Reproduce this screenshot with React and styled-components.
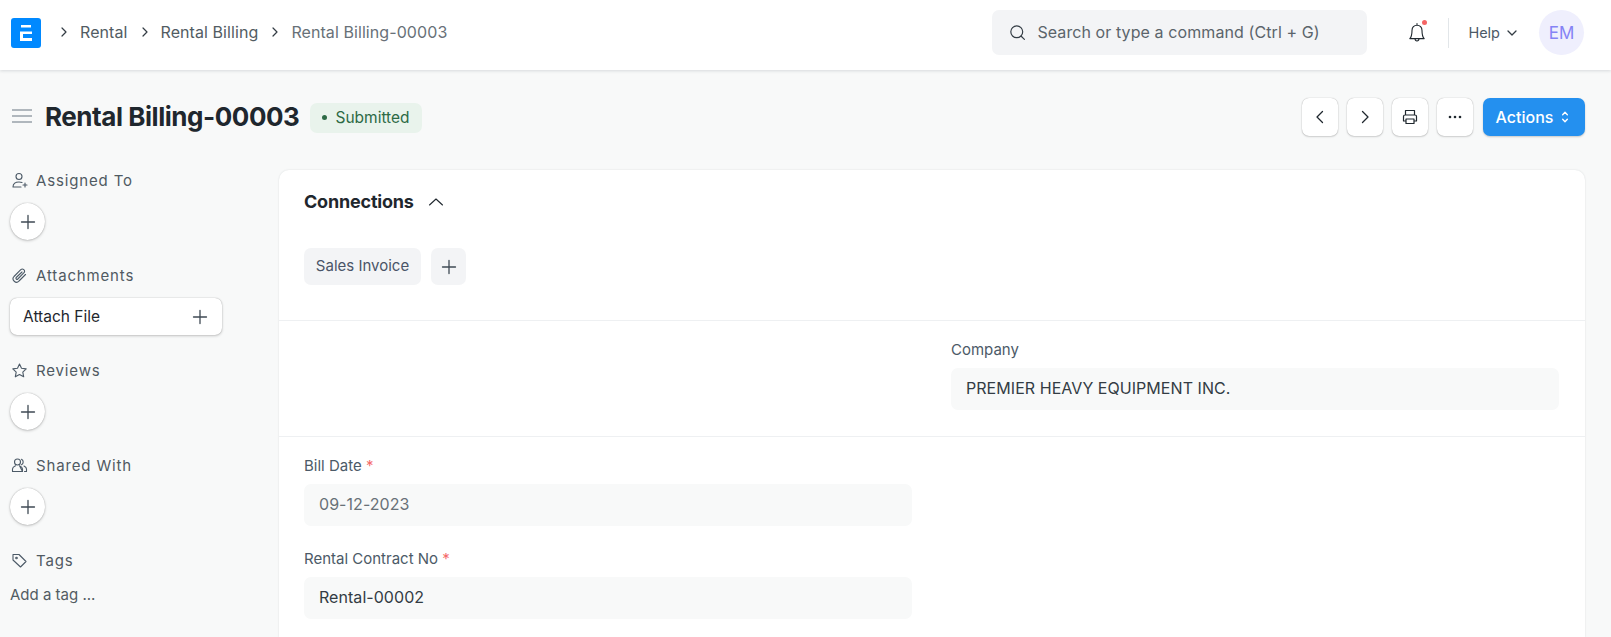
import React from "react";
import styled, { createGlobalStyle } from "styled-components";

const Global = createGlobalStyle`
  html, body { margin: 0; padding: 0; background: #f8f9f9; height: 637px; overflow: hidden; }
  body { font-family: Inter, "Liberation Sans", sans-serif; color: #1f272e; }
  * { box-sizing: border-box; }
`;

const Page = styled.div`width: 1611px; height: 637px; overflow: hidden; display: flex; flex-direction: column;`;
const Navbar = styled.header`
  height: 70px; flex: none; background: #fff; display: flex; align-items: center;
  padding: 0 27px 0 11px; box-shadow: 0 1px 3px rgba(25,39,52,.15);
`;
const Logo = styled.div`
  width: 30px; height: 30px; border-radius: 3px; background: #0089ff; margin-right: 17px; margin-top: -4px;
  display: flex; align-items: center; justify-content: center;
`;
const Crumbs = styled.nav`display: flex; align-items: center; flex: 1; margin-top: -6px;`;
const Crumb = styled.span`
  font-size: 16px; letter-spacing: .08px; color: ${p => (p.$last ? "#687178" : "#525c63")}; margin-left: 10px; margin-right: 11px;
  &:last-child { margin-right: 0; }
`;
const SearchBox = styled.div`
  width: 375px; height: 45px; border-radius: 7px; background: #f3f4f6; display: flex; align-items: center;
  padding: 0 0 1px 17px; gap: 11px; margin-top: -5px; font-size: 16px; color: #5b646b; letter-spacing: .09px;
`;
const BellWrap = styled.div`position: relative; width: 24px; height: 24px; margin-left: 38px; margin-top: -5px;`;
const BellDot = styled.span`position: absolute; top: -1px; right: 2px; width: 5px; height: 5px; border-radius: 50%; background: #f56565;`;
const VDivider = styled.div`width: 1px; height: 30px; background: #e2e6e9; margin: -5px 19px 0 19px;`;
const Help = styled.div`display: flex; align-items: center; gap: 6px; font-size: 14.5px; color: #4c5a67; margin-top: -5px;`;
const Avatar = styled.div`
  width: 45px; height: 45px; border-radius: 50%; background: #efeffd; color: #8583f5; margin-left: 21px; margin-top: -5px;
  display: flex; align-items: center; justify-content: center; font-size: 17px;
`;

const PageHead = styled.div`height: 100px; flex: none; display: flex; align-items: center; padding: 0 26px 0 12px;`;
const Burger = styled.div`margin-right: 13px; display: flex; margin-top: -8px;`;
const Title = styled.h1`margin: -8px 0 0; font-size: 26px; font-weight: 700; color: #1f272e; letter-spacing: -.45px;`;
const Badge = styled.div`
  margin: -5px 0 0 11px; height: 30px; padding: 0 12px; border-radius: 7px; background: #e9f3ec; color: #2d6a45;
  display: flex; align-items: center; gap: 8px; font-size: 15.5px;
  &::before { content: ""; width: 5px; height: 5px; border-radius: 50%; background: #2d6a45; }
`;
const Spacer = styled.div`flex: 1;`;
const Tools = styled.div`display: flex; gap: 9px; margin-top: -6px;`;
const ToolBtn = styled.button`
  width: 36px; height: 38px; padding: 0; border: 0; border-radius: 7px; background: #fff; display: flex; align-items: center; justify-content: center;
  box-shadow: 0 0 1px rgba(0,0,0,.35), 0 1px 2px rgba(0,0,0,.15);
`;
const ActionBtn = styled.button`
  width: 102px; height: 38px; margin-left: 1px; border: 0; border-radius: 7px; background: #2490ef; color: #fff; font: 500 16px Inter, sans-serif;
  display: flex; align-items: center; justify-content: center; gap: 5px; box-shadow: 0 1px 2px rgba(0,0,0,.2);
`;

const Body = styled.div`display: flex; flex: 1; min-height: 0; padding: 0 26px 0 10px;`;
const Side = styled.aside`width: 269px; flex: none; display: flex; flex-direction: column;`;
const SideSection = styled.section`height: ${p => p.$h || 95}px; flex: none;`;
const SideLabel = styled.div`
  display: flex; align-items: center; gap: 8px; font-size: 15px; font-weight: 400; letter-spacing: .85px; color: #505a62; height: 20px; margin-bottom: 13px; padding-left: 1px;
`;
const Round = styled.button`
  display: flex; align-items: center; justify-content: center; width: 35px; height: 37px; border: 0; padding: 0; border-radius: 50%; background: #fff;
  box-shadow: 0 0 1px rgba(0,0,0,.35), 0 1px 3px rgba(0,0,0,.2);
`;
const Attach = styled.button`
  width: 212px; height: 37px; border: 0; border-radius: 7px; background: #fff; padding: 0 14px 0 13px; display: flex; align-items: center; justify-content: space-between;
  font: 400 15.5px Inter, sans-serif; color: #1f272e; box-shadow: 0 0 1px rgba(0,0,0,.35), 0 1px 3px rgba(0,0,0,.2);
`;
const AddTag = styled.div`font-size: 15px; color: #525c63; padding-top: 2px;`;

const Card = styled.main`
  flex: 1; background: #fff; border-radius: 10px 10px 0 0; box-shadow: 0 0 2px rgba(25,39,52,.14);
`;
const Section = styled.div`padding: ${p => p.$pad || "0 25px"}; height: ${p => p.$h}px; border-bottom: ${p => (p.$line ? "1px solid #eef0f2" : "none")};`;
const ConnHead = styled.div`display: flex; align-items: center; gap: 14px; font-size: 18px; font-weight: 700; letter-spacing: -.2px; color: #1f272e; height: 24px;`;
const ConnTitle = styled.span`position: relative; top: -1px;`;
const Pills = styled.div`display: flex; gap: 10px; margin-top: 34px;`;
const Pill = styled.div`
  height: 37px; border-radius: 7px; background: #f3f4f6; font-size: 15px; color: #4a5468; display: flex; align-items: center; justify-content: center;
  white-space: nowrap; width: ${p => (p.$icon ? "35px" : "117px")}; padding-bottom: ${p => (p.$icon ? "0" : "2px")};
`;
const Columns = styled.div`display: grid; grid-template-columns: 608px 608px; gap: 39px;`;
const Field = styled.div`margin-bottom: ${p => p.$mb || 0}px; grid-column: ${p => p.$col || "auto"};`;
const Label = styled.label`display: block; font-size: 15px; color: #4c5a67; height: 20px; line-height: 20px; margin-bottom: 8px;`;
const Req = styled.span`color: #f56b6b;`;
const Value = styled.div`
  height: 42px; border-radius: 7px; background: #f8f9f9; display: flex; align-items: center; padding: 0 0 2px 15px; font-size: 16px;
  letter-spacing: .05px; color: ${p => p.$muted ? "#687178" : "#333c44"};
`;

const S = { fill: "none", stroke: "currentColor", strokeLinecap: "round", strokeLinejoin: "round" };
const Icon = ({ size = 16, color = "#4c5a67", sw = 1.1, children, vb = "0 0 16 16" }) => (
  <svg width={size} height={size} viewBox={vb} style={{ color, flex: "none" }} {...S} strokeWidth={sw}>{children}</svg>
);
const Plus = ({ size = 16, sw = 1.3 }) => <Icon size={size} sw={sw} color="#3f4a54"><path d="M8 1.500v13M1.500 8h13" /></Icon>;
const Chevron = () => <Icon size={12} color="#333c44" sw={1.2} vb="0 0 12 12"><path d="M4 2l4 4-4 4" /></Icon>;

export default function App() {
  return (
    <Page>
      <Global />
      <Navbar>
        <Logo>
          <svg width="14" height="16" viewBox="0 0 14 16" fill="#fff"><path d="M2 0h10v2.600H2zM1 6.400h12V9H1zM1 6.400h3V16H1zM1 13h12v3H1z" /></svg>
        </Logo>
        <Crumbs>
          <Chevron /><Crumb>Rental</Crumb>
          <Chevron /><Crumb>Rental Billing</Crumb>
          <Chevron /><Crumb $last>Rental Billing-00003</Crumb>
        </Crumbs>
        <SearchBox>
          <Icon size={17} color="#333c44" sw={1.1}><circle cx="7.300" cy="7.300" r="5.600" /><path d="M11.500 11.500l3 3" /></Icon>
          Search or type a command (Ctrl + G)
        </SearchBox>
        <BellWrap>
          <Icon size={24} color="#1f272e" sw={1.1} vb="0 0 24 24"><path d="M12 4.200c-3 0-5 2.200-5 5.200 0 4.400-.6 6.600-2.200 8.200h14.400c-1.600-1.600-2.200-3.800-2.200-8.200 0-3-2-5.200-5-5.200zM12 2.500v1.700M10 17.800c.1 1.400.9 2.200 2 2.200s1.900-.8 2-2.200" /></Icon>
          <BellDot />
        </BellWrap>
        <VDivider />
        <Help>
          Help
          <Icon size={12} color="#333c44" sw={1.3} vb="0 0 12 12"><path d="M2 4l4 4 4-4" /></Icon>
        </Help>
        <Avatar>EM</Avatar>
      </Navbar>
      <PageHead>
        <Burger><Icon size={20} color="#98a1a9" sw={1.7} vb="0 0 20 20"><path d="M.5 4h19M.5 10h19M.5 16h19" /></Icon></Burger>
        <Title>Rental Billing-00003</Title>
        <Badge>Submitted</Badge>
        <Spacer />
        <Tools>
          <ToolBtn><Icon size={16} color="#1f272e" sw={1.3}><path d="M10.500 2.500L5 8l5.500 5.500" /></Icon></ToolBtn>
          <ToolBtn><Icon size={16} color="#1f272e" sw={1.3}><path d="M5.500 2.500L11 8l-5.500 5.500" /></Icon></ToolBtn>
          <ToolBtn>
            <Icon size={18} color="#1f272e" sw={1.2} vb="0 0 18 18"><path d="M4.500 7V2.500h9V7M4.500 13H2.500V8.500A1.500 1.500 0 0 1 4 7h10a1.500 1.500 0 0 1 1.500 1.500V13h-2M5 11h8v4.500H5z" /></Icon>
          </ToolBtn>
          <ToolBtn>
            <svg width="14" height="4" viewBox="0 0 14 4" fill="#1f272e"><circle cx="2" cy="2" r="1.300" /><circle cx="7" cy="2" r="1.300" /><circle cx="12" cy="2" r="1.300" /></svg>
          </ToolBtn>
          <ActionBtn>
            Actions
            <Icon size={14} color="#fff" sw={1.2} vb="0 0 12 12"><path d="M4 4l2-2 2 2M4 8l2 2 2-2" /></Icon>
          </ActionBtn>
        </Tools>
      </PageHead>
      <Body>
        <Side>
          <SideSection>
            <SideLabel>
              <Icon size={17} vb="0 0 17 17"><circle cx="8" cy="4.500" r="3" /><path d="M2 15c0-3.500 2.500-5 6-5 1.200 0 2.200.2 3 .5M2 15h8M12 13h4M14 11v4" /></Icon>
              Assigned To
            </SideLabel>
            <Round><Plus /></Round>
          </SideSection>
          <SideSection>
            <SideLabel>
              <Icon size={17} vb="0 0 17 17"><path d="M14.500 7.500l-6.500 6.500a3.300 3.300 0 0 1-5-4.500l6.800-6.800a2.200 2.200 0 0 1 3.200 3L6.800 12a1.100 1.100 0 0 1-1.600-1.500L11 5" /></Icon>
              Attachments
            </SideLabel>
            <Attach>Attach File<Plus /></Attach>
          </SideSection>
          <SideSection>
            <SideLabel>
              <Icon size={17} vb="0 0 17 17"><path d="M8.500 2l2 4.300 4.700.6-3.400 3.200.9 4.700-4.200-2.300-4.200 2.300.9-4.700L1.800 6.900l4.700-.6z" /></Icon>
              Reviews
            </SideLabel>
            <Round><Plus /></Round>
          </SideSection>
          <SideSection>
            <SideLabel>
              <Icon size={17} vb="0 0 17 17"><circle cx="6.500" cy="5" r="3" /><path d="M1.500 14.500V12c0-1.500 1.500-2.500 3-3.200M8.500 8.800c1.500.7 3 1.700 3 3.200v2.500zM1.500 14.500h10M10.500 2.300a3 3 0 0 1 0 5.400M13 9c1.300.6 2.500 1.600 2.500 3v2.500h-2" /></Icon>
              Shared With
            </SideLabel>
            <Round><Plus /></Round>
          </SideSection>
          <SideSection>
            <SideLabel>
              <Icon size={17} vb="0 0 17 17"><path d="M2 2.500h6l7 7-5.500 5.500-7.500-7z" /><circle cx="5.500" cy="6" r=".8" /></Icon>
              Tags
            </SideLabel>
            <AddTag>Add a tag ...</AddTag>
          </SideSection>
        </Side>
        <Card>
          <Section $h={151} $line $pad="20px 25px 0">
            <ConnHead>
              <ConnTitle>Connections</ConnTitle>
              <Icon size={16} color="#1f272e" sw={1.1}><path d="M1.500 11L8 5l6.500 6" /></Icon>
            </ConnHead>
            <Pills>
              <Pill>Sales Invoice</Pill>
              <Pill $icon><Plus /></Pill>
            </Pills>
          </Section>
          <Section $h={116} $line $pad="19px 25px 0">
            <Columns>
              <Field $col="2"><Label>Company</Label><Value>PREMIER HEAVY EQUIPMENT INC.</Value></Field>
            </Columns>
          </Section>
          <Section $h={190} $pad="19px 25px 0">
            <Columns>
              <div>
                <Field $mb={23}><Label>Bill Date <Req>*</Req></Label><Value $muted>09-12-2023</Value></Field>
                <Field><Label>Rental Contract No <Req>*</Req></Label><Value>Rental-00002</Value></Field>
              </div>
            </Columns>
          </Section>
        </Card>
      </Body>
    </Page>
  );
}
